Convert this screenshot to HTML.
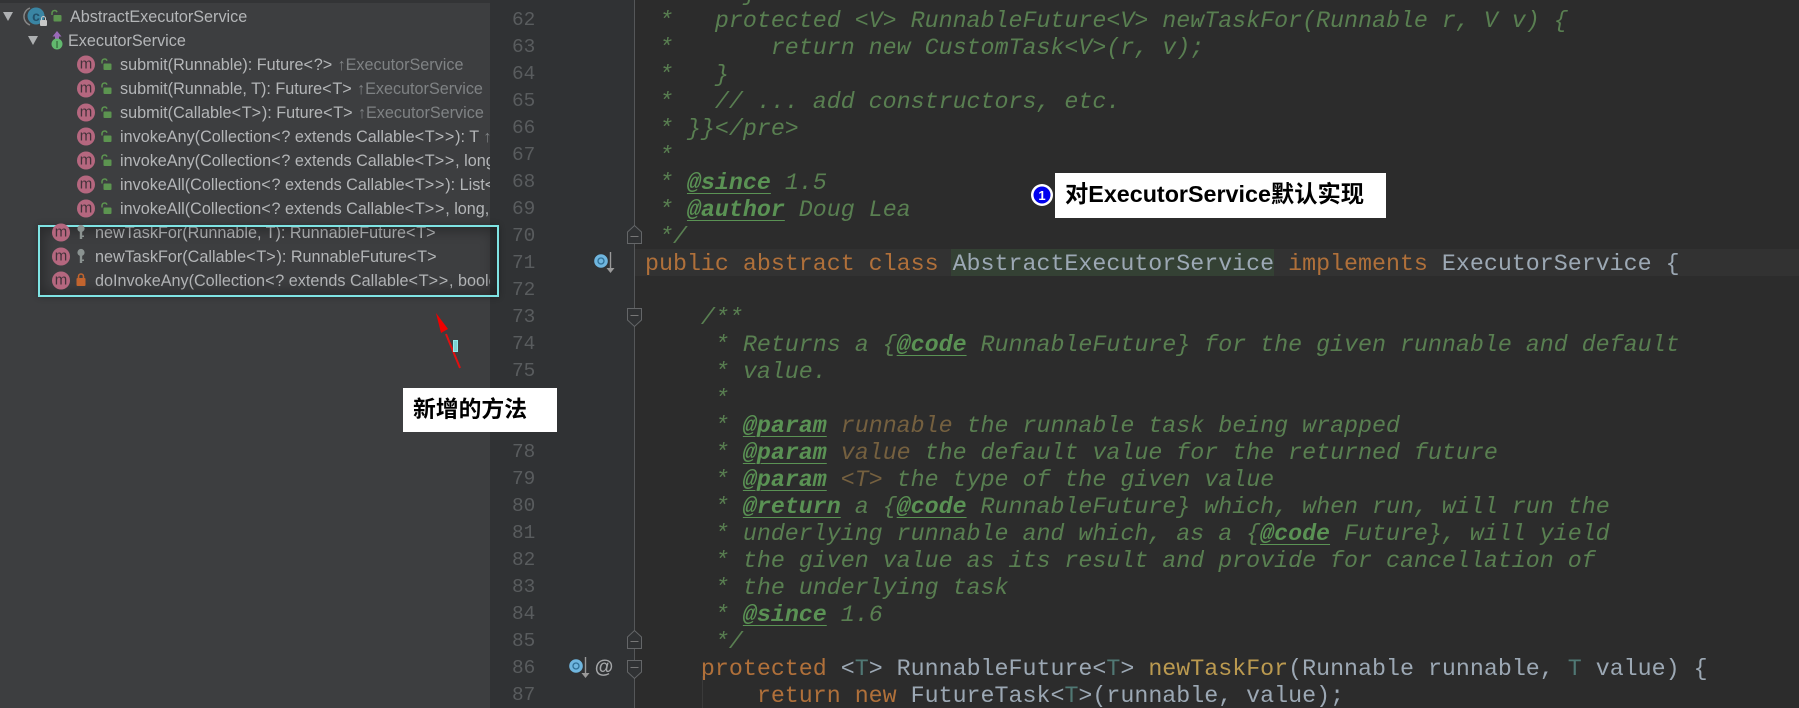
<!DOCTYPE html>
<html>
<head>
<meta charset="utf-8">
<style>
html,body{margin:0;padding:0;background:#2b2b2b}
#page{position:relative;width:1799px;height:708px;overflow:hidden;background:#2c2c2c;filter:blur(.35px)}
#panel{position:absolute;left:0;top:0;width:490px;height:708px;background:#3d3e40;overflow:hidden}
#topline{position:absolute;left:0;top:0;width:490px;height:3px;background:#333436}
.r{position:absolute;white-space:pre;height:24px;line-height:24px;font-family:"Liberation Sans",sans-serif;font-size:16.2px;color:#b4b6b8}
.r em{font-style:normal;letter-spacing:.75px}
.g{color:#7f8284}
#gutter{position:absolute;left:490px;top:0;width:144px;height:708px;background:#303234}
.n{position:absolute;left:512px;width:40px;height:27px;line-height:27px;font-family:"Liberation Mono",monospace;font-size:19.4px;color:#595c5e;margin-top:1px}
#hl{position:absolute;left:635px;top:249px;width:1164px;height:27px;background:#323232}
#sym{position:absolute;left:951px;top:249px;width:323px;height:27px;background:#344134}
.c{position:absolute;left:645px;height:27px;line-height:27px;white-space:pre;font-family:"Liberation Mono",monospace;font-size:23.3px;color:#597f51;font-style:italic;margin-top:2px}
.c b{font-weight:bold;color:#5a9254;text-decoration:underline;text-underline-offset:4px;text-decoration-thickness:1px}
.c i{color:#75603f}
.p{font-style:normal;color:#9ca8b4}
.k{font-style:normal;color:#b0703a}
.t{font-style:normal;color:#507874}
.o{font-style:normal;color:#9ca8b4}
#svg{position:absolute;left:0;top:0}
.box{position:absolute;background:#fff;color:#000;font-family:"Liberation Sans","Noto Sans CJK SC",sans-serif;font-weight:bold;white-space:pre}
#cy{position:absolute;left:38px;top:225px;width:457px;height:68px;border:2px solid #7fe4e4;box-shadow:inset 0 0 12px 4px rgba(0,0,0,.3),0 0 6px rgba(0,0,0,.3)}
</style>
</head>
<body>
<div id="page">
<div id="panel">
<div id="topline"></div>
<div class="r" style="left:70px;top:5px">AbstractExecutorService</div>
<div class="r" style="left:68px;top:29px">ExecutorService</div>
<div class="r" style="left:120px;top:53px">submit(Runnable): Future<em>&lt;</em>?<em>&gt;</em> <span class="g">↑ExecutorService</span></div>
<div class="r" style="left:120px;top:77px">submit(Runnable, T): Future<em>&lt;</em>T<em>&gt;</em> <span class="g">↑ExecutorService</span></div>
<div class="r" style="left:120px;top:101px">submit(Callable<em>&lt;</em>T<em>&gt;</em>): Future<em>&lt;</em>T<em>&gt;</em> <span class="g">↑ExecutorService</span></div>
<div class="r" style="left:120px;top:125px">invokeAny(Collection<em>&lt;</em>? extends Callable<em>&lt;</em>T<em>&gt;&gt;</em>): T <span class="g">↑ExecutorService</span></div>
<div class="r" style="left:120px;top:149px">invokeAny(Collection<em>&lt;</em>? extends Callable<em>&lt;</em>T<em>&gt;&gt;</em>, long, TimeUnit): T</div>
<div class="r" style="left:120px;top:173px">invokeAll(Collection<em>&lt;</em>? extends Callable<em>&lt;</em>T<em>&gt;&gt;</em>): List<em>&lt;</em>Future<em>&lt;</em>T<em>&gt;&gt;</em></div>
<div class="r" style="left:120px;top:197px">invokeAll(Collection<em>&lt;</em>? extends Callable<em>&lt;</em>T<em>&gt;&gt;</em>, long, TimeUnit)</div>
<div class="r" style="left:95px;top:221px">newTaskFor(Runnable, T): RunnableFuture<em>&lt;</em>T<em>&gt;</em></div>
<div class="r" style="left:95px;top:245px">newTaskFor(Callable<em>&lt;</em>T<em>&gt;</em>): RunnableFuture<em>&lt;</em>T<em>&gt;</em></div>
<div class="r" style="left:95px;top:269px">doInvokeAny(Collection<em>&lt;</em>? extends Callable<em>&lt;</em>T<em>&gt;&gt;</em>, boolean, long)</div>
</div>

<div id="gutter"></div>
<div class="n" style="top:6px">62</div>
<div class="n" style="top:33px">63</div>
<div class="n" style="top:60px">64</div>
<div class="n" style="top:87px">65</div>
<div class="n" style="top:114px">66</div>
<div class="n" style="top:141px">67</div>
<div class="n" style="top:168px">68</div>
<div class="n" style="top:195px">69</div>
<div class="n" style="top:222px">70</div>
<div class="n" style="top:249px">71</div>
<div class="n" style="top:276px">72</div>
<div class="n" style="top:303px">73</div>
<div class="n" style="top:330px">74</div>
<div class="n" style="top:357px">75</div>
<div class="n" style="top:384px">76</div>
<div class="n" style="top:411px">77</div>
<div class="n" style="top:438px">78</div>
<div class="n" style="top:465px">79</div>
<div class="n" style="top:492px">80</div>
<div class="n" style="top:519px">81</div>
<div class="n" style="top:546px">82</div>
<div class="n" style="top:573px">83</div>
<div class="n" style="top:600px">84</div>
<div class="n" style="top:627px">85</div>
<div class="n" style="top:654px">86</div>
<div class="n" style="top:681px">87</div>

<div id="hl"></div>
<div id="sym"></div>

<div class="c" style="top:-21px"> *     }</div>
<div class="c" style="top:6px"> *   protected &lt;V&gt; RunnableFuture&lt;V&gt; newTaskFor(Runnable r, V v) {</div>
<div class="c" style="top:33px"> *       return new CustomTask&lt;V&gt;(r, v);</div>
<div class="c" style="top:60px"> *   }</div>
<div class="c" style="top:87px"> *   // ... add constructors, etc.</div>
<div class="c" style="top:114px"> * }}&lt;/pre&gt;</div>
<div class="c" style="top:141px"> *</div>
<div class="c" style="top:168px"> * <b>@since</b> 1.5</div>
<div class="c" style="top:195px"> * <b>@author</b> Doug Lea</div>
<div class="c" style="top:222px"> */</div>
<div class="c" style="top:249px"><span class="k">public abstract class </span><span class="p">AbstractExecutorService </span><span class="k">implements </span><span class="p">ExecutorService {</span></div>
<div class="c" style="top:303px">    /**</div>
<div class="c" style="top:330px">     * Returns a {<b>@code</b> RunnableFuture} for the given runnable and default</div>
<div class="c" style="top:357px">     * value.</div>
<div class="c" style="top:384px">     *</div>
<div class="c" style="top:411px">     * <b>@param</b> <i>runnable</i> the runnable task being wrapped</div>
<div class="c" style="top:438px">     * <b>@param</b> <i>value</i> the default value for the returned future</div>
<div class="c" style="top:465px">     * <b>@param</b> <i>&lt;T&gt;</i> the type of the given value</div>
<div class="c" style="top:492px">     * <b>@return</b> a {<b>@code</b> RunnableFuture} which, when run, will run the</div>
<div class="c" style="top:519px">     * underlying runnable and which, as a {<b>@code</b> Future}, will yield</div>
<div class="c" style="top:546px">     * the given value as its result and provide for cancellation of</div>
<div class="c" style="top:573px">     * the underlying task</div>
<div class="c" style="top:600px">     * <b>@since</b> 1.6</div>
<div class="c" style="top:627px">     */</div>
<div class="c" style="top:654px">    <span class="k">protected </span><span class="o">&lt;</span><span class="t">T</span><span class="o">&gt; RunnableFuture&lt;</span><span class="t">T</span><span class="o">&gt; </span><span class="k" style="color:#bb9a50">newTaskFor</span><span class="o">(Runnable runnable, </span><span class="t">T</span><span class="o"> value) {</span></div>
<div class="c" style="top:681px">        <span class="k">return new </span><span class="o">FutureTask&lt;</span><span class="t">T</span><span class="o">&gt;(runnable, value);</span></div>

<div id="cy"></div>

<svg id="svg" width="1799" height="708" viewBox="0 0 1799 708" xmlns="http://www.w3.org/2000/svg">
<defs>
<g id="m"><circle r="9" fill="#b5677f"/><text x="0" y="4" text-anchor="middle" font-family="Liberation Sans,sans-serif" font-size="15" fill="#43323a">m</text></g>
<g id="ol"><path d="M-4 -1V-3.2A2.6 2.6 0 0 1 1 -3.8" fill="none" stroke="#5c9450" stroke-width="1.5"/><rect x="-2.5" y="-1" width="8" height="6.5" rx="1" fill="#5c9450"/></g>
<g id="key"><circle cx="0" cy="-4" r="3.6" fill="#8a9290"/><rect x="-1.2" y="-1" width="2.4" height="7.5" fill="#8a9290"/><rect x="0" y="3" width="3" height="1.5" fill="#8a9290"/></g>
</defs>

<!-- tree triangles -->
<path d="M3 12H13L8 21Z" fill="#aeb0b2"/>
<path d="M28 36H38L33 45Z" fill="#aeb0b2"/>

<!-- class icon -->
<path d="M30 8A9 9 0 0 0 30 25" fill="none" stroke="#888" stroke-width="1.4"/>
<circle cx="36" cy="16" r="8.5" fill="#3a85a3"/>
<text x="36" y="21" text-anchor="middle" font-family="Liberation Sans,sans-serif" font-size="14" fill="#22506a" font-weight="bold">c</text>
<rect x="40" y="20" width="7" height="6" rx="1" fill="#c8c8c8"/>
<path d="M41.5 20V18.5A2 2 0 0 1 45.5 18.5V20" fill="none" stroke="#c8c8c8" stroke-width="1"/>
<use href="#ol" x="56" y="16"/>

<!-- interface icon -->
<path d="M57 31L61.5 36.5H59V39H55V36.5H52.5Z" fill="#9a6ab8"/>
<circle cx="57" cy="44" r="5.5" fill="#62b96e"/>
<text x="57" y="48" text-anchor="middle" font-family="Liberation Sans,sans-serif" font-size="10" fill="#27512c">I</text>

<!-- method rows -->
<use href="#m" x="86" y="64.5"/><use href="#ol" x="106" y="64.5"/>
<use href="#m" x="86" y="88.5"/><use href="#ol" x="106" y="88.5"/>
<use href="#m" x="86" y="112.5"/><use href="#ol" x="106" y="112.5"/>
<use href="#m" x="86" y="136.5"/><use href="#ol" x="106" y="136.5"/>
<use href="#m" x="86" y="160.5"/><use href="#ol" x="106" y="160.5"/>
<use href="#m" x="86" y="184.5"/><use href="#ol" x="106" y="184.5"/>
<use href="#m" x="86" y="208.5"/><use href="#ol" x="106" y="208.5"/>
<use href="#m" x="61" y="232.5"/><use href="#key" x="81" y="232.5"/>
<use href="#m" x="61" y="256.5"/><use href="#key" x="81" y="256.5"/>
<use href="#m" x="61" y="280.5"/>
<rect x="76.5" y="278" width="9" height="8" rx="1" fill="#c2642e"/>
<path d="M78.5 278V276.5A2.5 2.5 0 0 1 83.5 276.5V278" fill="none" stroke="#c2642e" stroke-width="1.6"/>

<!-- fold line and markers -->
<path d="M634.5 0V708" stroke="#555759" stroke-width="1"/>
<g fill="#303234" stroke="#646668" stroke-width="1">
<path d="M627.5 243.5V232L634.5 225.5L641.5 232V243.5Z"/>
<path d="M627.5 308.5V320L634.5 326.5L641.5 320V308.5Z"/>
<path d="M627.5 648.5V637L634.5 630.5L641.5 637V648.5Z"/>
<path d="M627.5 660.5V672L634.5 678.5L641.5 672V660.5Z"/>
</g>
<g stroke="#777" stroke-width="1">
<path d="M630.5 236.5H638.5"/>
<path d="M630.5 315.5H638.5"/>
<path d="M630.5 641.5H638.5"/>
<path d="M630.5 667.5H638.5"/>
</g>
<path d="M702.5 676V708" stroke="#3a3a3a"/>

<!-- override icons -->
<circle cx="601" cy="261" r="6.8" fill="#6fb6df"/>
<circle cx="601" cy="261" r="3" fill="none" stroke="#2f6f96" stroke-width="1.3"/>
<path d="M610.5 252V268" stroke="#9a9a9a" stroke-width="1.4"/>
<path d="M606.5 268H614.5L610.5 273Z" fill="#9a9a9a"/>
<circle cx="576" cy="666" r="6.8" fill="#6fb6df"/>
<circle cx="576" cy="666" r="3" fill="none" stroke="#2f6f96" stroke-width="1.3"/>
<path d="M585.5 657V673" stroke="#9a9a9a" stroke-width="1.4"/>
<path d="M581.5 673H589.5L585.5 678Z" fill="#9a9a9a"/>
<text x="604" y="673" text-anchor="middle" font-family="Liberation Sans,sans-serif" font-size="19" font-weight="bold" fill="#a4a6a8">@</text>

<!-- red arrow -->
<path d="M460 368L446 334" stroke="#e01010" stroke-width="2"/>
<path d="M436 313L448 329L441 333Z" fill="#f00000"/>
<rect x="453.5" y="340.5" width="4" height="11" fill="#7fd0d0" stroke="#8fecec" stroke-width="1"/>

<!-- badge -->
<circle cx="1042" cy="195" r="11" fill="#fff"/>
<circle cx="1042" cy="195" r="8.5" fill="#0000ee"/>
<text x="1042" y="200" text-anchor="middle" font-family="Liberation Sans,sans-serif" font-size="13" font-weight="bold" fill="#fff">1</text>
</svg>

<div class="box" style="left:1055px;top:173px;width:331px;height:45px;line-height:43px;font-size:23.3px;padding-left:10px;box-sizing:border-box">对ExecutorService默认实现</div>
<div class="box" style="left:403px;top:388px;width:154px;height:44px;line-height:40px;font-size:22.8px;padding-left:10px;box-sizing:border-box;font-family:'Noto Sans CJK SC',sans-serif">新增的方法</div>
</div>
</body>
</html>
